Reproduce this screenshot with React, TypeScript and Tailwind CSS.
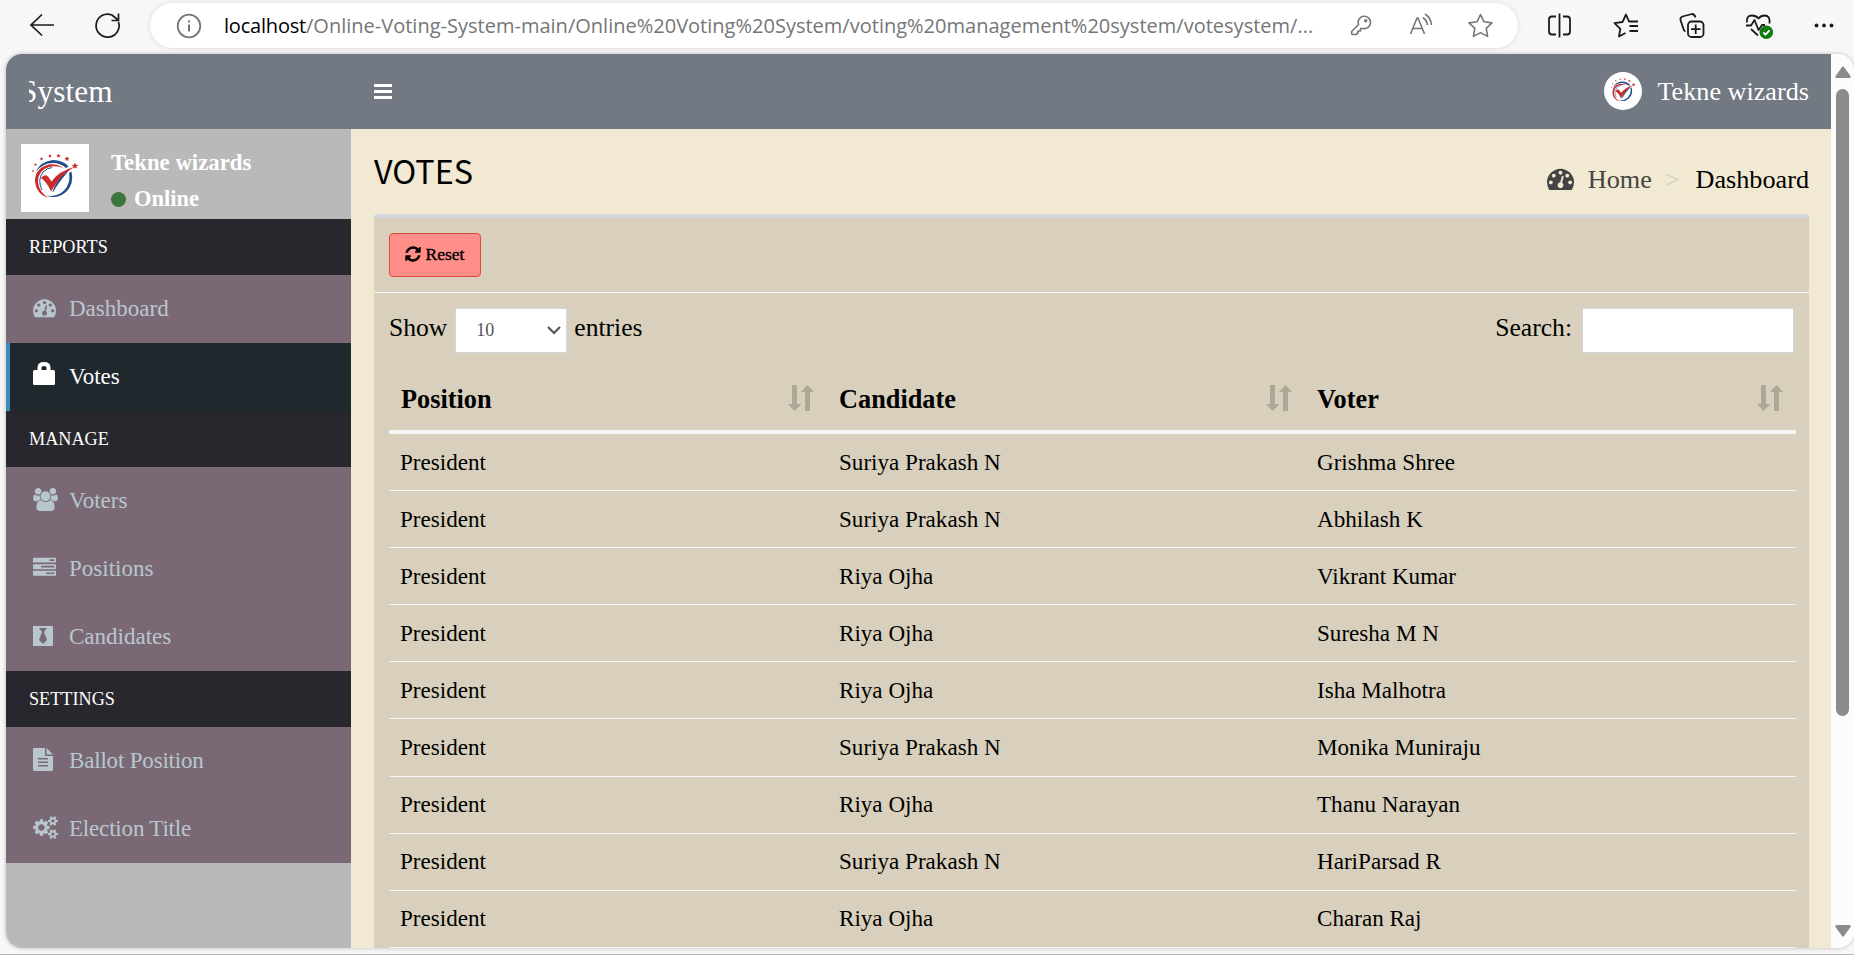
import React from "react";

const gaugePath =
  "M384 1152q0-53-37.5-90.5t-90.5-37.5-90.5 37.5-37.5 90.5 37.5 90.5 90.5 37.5 90.5-37.5 37.5-90.5zm192-448q0-53-37.5-90.5t-90.5-37.5-90.5 37.5-37.5 90.5 37.5 90.5 90.5 37.5 90.5-37.5 37.5-90.5zm428 481l101-382q6-26-7.5-48.5t-38.5-29.5-48 6.5-30 39.5l-101 382q-60 5-107 43.5t-63 98.5q-20 77 20 146t117 89 146-20 89-117q16-60-6-117t-72-91zm660-33q0-53-37.5-90.5t-90.5-37.5-90.5 37.5-37.5 90.5 37.5 90.5 90.5 37.5 90.5-37.5 37.5-90.5zm-640-640q0-53-37.5-90.5t-90.5-37.5-90.5 37.5-37.5 90.5 37.5 90.5 90.5 37.5 90.5-37.5 37.5-90.5zm448 192q0-53-37.5-90.5t-90.5-37.5-90.5 37.5-37.5 90.5 37.5 90.5 90.5 37.5 90.5-37.5 37.5-90.5zm320 448q0 261-141 483-19 29-54 29h-1402q-35 0-54-29-141-221-141-483 0-182 71-348t191-286 286-191 348-71 348 71 286 191 191 286 71 348z";
const refreshPath =
  "M1639 1056q0 5-1 7-64 268-268 434.5t-478 166.5q-146 0-282.5-55t-243.5-157l-129 129q-19 19-45 19t-45-19-19-45v-448q0-26 19-45t45-19h448q26 0 45 19t19 45-19 45l-137 137q71 66 161 102t187 36q134 0 250-65t186-179q11-17 53-117 8-23 30-23h192q13 0 22.5 9.5t9.5 22.5zm25-800v448q0 26-19 45t-45 19h-448q-26 0-45-19t-19-45 19-45l138-138q-148-137-349-137-134 0-250 65t-186 179q-11 17-53 117-8 23-30 23h-199q-13 0-22.5-9.5t-9.5-22.5v-7q65-268 270-434.5t480-166.5q146 0 284 55.5t245 156.5l130-129q19-19 45-19t45 19 19 45z";
const tasksPath =
  "M1024 1408h640v-128h-640v128zm-384-512h1024v-128h-1024v128zm640-512h384v-128h-384v128zm512 832v256q0 26-19 45t-45 19h-1664q-26 0-45-19t-19-45v-256q0-26 19-45t45-19h1664q26 0 45 19t19 45zm0-512v256q0 26-19 45t-45 19h-1664q-26 0-45-19t-19-45v-256q0-26 19-45t45-19h1664q26 0 45 19t19 45zm0-512v256q0 26-19 45t-45 19h-1664q-26 0-45-19t-19-45v-256q0-26 19-45t45-19h1664q26 0 45 19t19 45z";
const usersPath =
  "M593 896q-162 5-265 128h-134q-82 0-138-40.5t-56-118.5q0-353 124-353 6 0 43.5 21t97.5 42.5 119 21.5q67 0 133-23-5 37-5 66 0 139 81 256zm1071 637q0 120-73 189.5t-194 69.5h-874q-121 0-194-69.5t-73-189.5q0-53 3.5-103.5t14-109 26.5-108.5 43-97.5 62-81 85.5-53.5 111.5-20q10 0 43 21.5t73 48 107 48 135 21.5 135-21.5 107-48 73-48 43-21.5q61 0 111.5 20t85.5 53.5 62 81 43 97.5 26.5 108.5 14 109 3.5 103.5zm-1024-1277q0 106-75 181t-181 75-181-75-75-181 75-181 181-75 181 75 75 181zm704 384q0 159-112.5 271.5t-271.5 112.5-271.5-112.5-112.5-271.5 112.5-271.5 271.5-112.5 271.5 112.5 112.5 271.5zm576 225q0 78-56 118.5t-138 40.5h-134q-103-123-265-128 81-117 81-256 0-29-5-66 66 23 133 23 59 0 119-21.5t97.5-42.5 43.5-21q124 0 124 353zm-128-609q0 106-75 181t-181 75-181-75-75-181 75-181 181-75 181 75 75 181z";
const smallGear =
  "v140q0 16-149 31-12 27-30 52 51 113 51 138 0 4-4 7-122 71-124 71-8 0-46-47t-52-68q-20 2-30 2t-30-2q-14 21-52 68t-46 47q-2 0-124-71-4-3-4-7 0-25 51-138-18-25-30-52-149-15-149-31v-140q0-16 149-31 13-29 30-52-51-113-51-138 0-4 4-7 4-2 35-20t59-34 30-16q8 0 46 46.500t52 67.500q20-2 30-2t30 2q51-71 92-112l6-2q4 0 124 70 4 3 4 7 0 25-51 138 17 23 30 52 149 15 149 31z";
const cogsPath =
  "M896 896q0-106-75-181t-181-75-181 75-75 181 75 181 181 75 181-75 75-181zm768 512q0-52-38-90t-90-38-90 38-38 90q0 53 37.500 90.500t90.500 37.500 90.500-37.500 37.500-90.500zm0-1024q0-52-38-90t-90-38-90 38-38 90q0 53 37.500 90.500t90.500 37.500 90.500-37.500 37.500-90.500zm-384 421v185q0 10-7 19.500t-16 10.500l-155 24q-11 35-32 76 34 48 90 115 7 11 7 20 0 12-7 19-23 30-82.500 89.500t-78.500 59.500q-11 0-21-7l-115-90q-37 19-77 31-11 108-23 155-7 24-30 24h-186q-11 0-20-7.500t-10-17.500l-23-153q-34-10-75-31l-118 89q-7 7-20 7-11 0-21-8-144-133-144-160 0-9 7-19 10-14 41-53t47-61q-23-44-35-82l-152-24q-10-1-17-9.500t-7-19.500v-185q0-10 7-19.500t16-10.500l155-24q11-35 32-76-34-48-90-115-7-11-7-20 0-12 7-20 22-30 82-89t79-59q11 0 21 7l115 90q34-18 77-32 11-108 23-154 7-24 30-24h186q11 0 20 7.500t10 17.500l23 153q34 10 75 31l118-89q8-7 20-7 11 0 21 8 144 133 144 160 0 8-7 19-12 16-42 54t-45 60q23 48 34 82l152 23q10 2 17 10.500t7 19.500zM1920 1338" +
  smallGear +
  "M1920 314" +
  smallGear;

function Glyph({ d, box, className }: { d: string; box: string; className: string }) {
  return (
    <svg viewBox={box} className={className} fill="currentColor" fillRule="evenodd">
      <path d={d} />
    </svg>
  );
}

function Star({ x, y, r }: { x: number; y: number; r: number }) {
  const pts = Array.from({ length: 10 }, (_, i) => {
    const a = (Math.PI / 5) * i - Math.PI / 2;
    const q = i % 2 ? r * 0.45 : r;
    return `${x + q * Math.cos(a)},${y + q * Math.sin(a)}`;
  }).join(" ");
  return <polygon points={pts} fill="#cc2b2b" />;
}

function Logo({ className }: { className: string }) {
  return (
    <svg viewBox="0 0 68 68" className={className}>
      <path d="M14.500 28Q20 17 32 16Q42 16 47.500 22.500L45 24Q39 19 32 19Q22 19 14.500 28Z" fill="#20508c" />
      <path d="M50.500 27.500Q53.500 40 45 48Q36 56 25 51.500Q36 53.500 43 46.500Q50 39 48 29Z" fill="#20508c" />
      <path d="M42.500 24.500Q36 19.500 28 20.500Q14 24 14 37Q15 50 27.500 54Q18 48 17 38Q17 26 28 23Q36 21 42.500 24.500Z" fill="#cc2b2b" />
      <path d="M21 46Q16 36 22 28Q26 24 31 23.500" fill="none" stroke="#20508c" strokeWidth="1" />
      <path d="M20 34q3.500-4.500 7-1.500l3.500 5Q38 27 53 23Q39 32 30 47.500Q26 38 20 34Z" fill="#cc2b2b" />
      <path d="M46.500 27.500Q36 36 32 47.500Q36 40 46.500 27.500Z" fill="#20508c" stroke="#20508c" strokeWidth="1" />
      <Star x={12} y={27} r={1.300} />
      <Star x={14.500} y={20.500} r={1.700} />
      <Star x={20.500} y={15} r={1.900} />
      <Star x={29} y={12} r={2} />
      <Star x={37.500} y={11.800} r={2.300} />
      <Star x={46} y={14.800} r={2.600} />
      <Star x={54} y={22} r={3.500} />
    </svg>
  );
}

function Lock() {
  return (
    <svg viewBox="0 0 22 23" className="mb-[5px] h-[23px] w-[22px]" fill="none">
      <path d="M6.500 9V5.500Q6.500 2 11 2t4.500 3.500V9" stroke="currentColor" strokeWidth="4" />
      <rect y="8" width="22" height="15" rx="1.500" fill="currentColor" />
    </svg>
  );
}
function Tie() {
  return (
    <svg viewBox="0 0 20 20" className="h-[20px] w-[20px]" fill="currentColor" fillRule="evenodd">
      <path d="M0 0h20v20H0zM6 2l3 4-3 8 4 4 4-4-3-8 3-4z" />
    </svg>
  );
}
function Doc() {
  return (
    <svg viewBox="0 0 20 23" className="h-[23px] w-[20px]" fill="currentColor" fillRule="evenodd">
      <path d="M1 0h11v8h8v14l-1 1H1l-1-1V1zM5 10h10v1.500H5zM5 13.500h10V15H5zM5 17h10v1.500H5z" />
      <path d="M13.500 0 20 6.500h-6.500z" />
    </svg>
  );
}

function Section({ children }: { children: string }) {
  return (
    <div className="flex h-14 items-center bg-[#28272d] pl-[23px] text-[18.200px] leading-[22px] text-white">
      {children}
    </div>
  );
}
function Item({
  icon,
  label,
  active,
  tight,
}: {
  icon: React.ReactNode;
  label: string;
  active?: boolean;
  tight?: boolean;
}) {
  return (
    <div
      className={
        active
          ? "flex h-[68px] items-center border-l-4 border-[#3c8dbc] bg-[#1f282d] pl-[23px] text-white"
          : "flex h-[68px] items-center border-l-4 border-[#7a6974] bg-[#7a6974] pl-[23px] text-[#b8c7ce]"
      }
    >
      <span className="flex w-9 items-center pb-[3px]">{icon}</span>
      <span className={tight ? "text-[23px] leading-[26px] tracking-[-0.18px]" : "text-[23px] leading-[26px]"}>
        {label}
      </span>
    </div>
  );
}

function Sort() {
  return (
    <svg viewBox="0 0 26 26" className="h-[26px] w-[26px]" fill="#aea795">
      <path d="M4 0h5v19h4.500L6.500 26 0 19h4zM13 7l6.500-7L26 7h-4v19h-5V7z" />
    </svg>
  );
}

const rows = [
  ["Suriya Prakash N", "Grishma Shree"],
  ["Suriya Prakash N", "Abhilash K"],
  ["Riya Ojha", "Vikrant Kumar"],
  ["Riya Ojha", "Suresha M N"],
  ["Riya Ojha", "Isha Malhotra"],
  ["Suriya Prakash N", "Monika Muniraju"],
  ["Riya Ojha", "Thanu Narayan"],
  ["Suriya Prakash N", "HariParsad R"],
  ["Riya Ojha", "Charan Raj"],
];

function BrowserBar() {
  return (
    <div className="flex h-[54px] shrink-0 items-start bg-[#f7f7f7] text-[#1b1b1b]">
      <svg viewBox="0 0 150 54" className="h-[54px] w-[150px] shrink-0" fill="none" stroke="currentColor" strokeWidth="1.700">
        <path d="M42 14.500 31 25l11 10.500M31 25h23" />
        <path d="M118.500 22A11.500 11.500 0 1 1 112 15l5.500 4.500M118.500 13.500V20.500H111.500" />
      </svg>
      <div className="mt-[3px] flex h-[45px] w-[1368px] shrink-0 items-center rounded-full bg-white pl-[26px] text-[#767676] shadow-[0_0_5px_rgba(0,0,0,0.12)]">
        <svg viewBox="0 0 26 26" className="h-[26px] w-[26px] shrink-0" fill="none" stroke="currentColor" strokeWidth="1.800">
          <circle cx="13" cy="13" r="11.300" />
          <path d="M13 11.500v7M13 7.500v2" strokeWidth="2" />
        </svg>
        <div className="ml-[22px] w-[1109px] shrink-0 whitespace-nowrap font-['Open_Sans',sans-serif] text-[20px]">
          <span className="tracking-[-0.2px] text-black">localhost</span>
          <span className="tracking-[0.01px]">
            /Online-Voting-System-main/Online%20Voting%20System/voting%20management%20system/votesystem/...
          </span>
        </div>
        <svg viewBox="1333 3 160 45" className="h-[45px] w-[160px] shrink-0" fill="none" stroke="currentColor" strokeWidth="1.600" strokeLinejoin="round">
          <path d="M1351.700 31.500 1358.500 24.500A6.200 6.200 0 1 1 1363 28.500H1360.500V31H1358V33L1356 34.500H1352.500Q1351.700 34.500 1351.700 33.500Z" />
          <circle cx="1365.700" cy="20.700" r="1" />
          <path d="M1410.500 34 1417 18h1l6.500 16M1413 28.500h9.500M1423 17.500q4 3 4.500 7.500M1425 14q6 4 6.500 11" />
          <path d="m1480.500 14.500 3.500 7.300 8 1.100-5.800 5.500 1.400 8-7.100-3.800-7.100 3.800 1.400-8-5.800-5.500 8-1.100z" />
        </svg>
      </div>
      <svg viewBox="1518 0 336 54" className="h-[54px] w-[336px] shrink-0" fill="none" stroke="currentColor" strokeWidth="1.800" strokeLinejoin="round">
        <path d="M1556 16.500h-4q-3 0-3 3v12q0 3 3 3h4M1563 16.500h4q3 0 3 3v12q0 3-3 3h-4M1559.500 13.500v24" />
        <path d="M1631 21.500H1629L1626 14.500 1622.500 22 1614.500 23.200 1620.300 28.800 1619 36.500 1625.500 33M1629.500 26H1638M1629.500 31H1638M1629 21.500H1638" />
        <rect x="1688" y="21.500" width="15.500" height="15.500" rx="3.500" />
        <path d="M1695.700 24.500v9.500M1691 29.200h9.500M1685.500 31.500q-1.500-.5-2-2.500l-3-9q-.5-2.500 2-3.500l9.500-2.500q2.500 0 3.500 3.500" />
        <path d="M1747 22.500q-1-7 5-7 4 0 6.500 3 2.500-3 6-3 6 0 5 8M1746 25.500h5l3.500-5.500 4 10 3.500-5h3M1751 29l7 6.500" />
        <circle cx="1766.300" cy="32.300" r="6.800" fill="#107c10" stroke="none" />
        <path d="m1763.300 32.500 2.200 2.200 4-4.400" stroke="white" />
        <g fill="currentColor" stroke="none">
          <circle cx="1816.500" cy="25.500" r="1.900" />
          <circle cx="1824" cy="25.500" r="1.900" />
          <circle cx="1831.500" cy="25.500" r="1.900" />
        </g>
      </svg>
    </div>
  );
}

function Header({ label, w }: { label: string; w: string }) {
  return (
    <div className={`flex items-center justify-between pl-3 pr-[13px] text-[26.300px] font-bold ${w}`}>
      <span className="pt-1">{label}</span>
      <Sort />
    </div>
  );
}

export default function App() {
  return (
    <div className="flex h-[955px] w-[1854px] flex-col overflow-hidden bg-[#f7f7f7] font-['Liberation_Serif',serif]">
      <BrowserBar />
      <div className="ml-1.5 flex h-[894px] overflow-hidden rounded-2xl shadow-[0_0_4px_rgba(0,0,0,0.25)]">
        <div className="flex w-[1825px] flex-col">
          <div className="flex h-[75px] shrink-0 items-center bg-[#727983] text-white">
            <div className="w-[345px] pl-[23px]">
              <div className="flex h-10 w-[200px] items-center overflow-hidden pt-0.5 text-[31.300px]">
                <span className="-ml-[9px] tracking-[0.1px]">System</span>
              </div>
            </div>
            <svg viewBox="0 0 18 15" className="ml-[23px] h-[15px] w-[18px]" fill="white">
              <path d="M0 0h18v3H0zM0 6h18v3H0zM0 12h18v3H0z" />
            </svg>
            <div className="ml-auto flex items-center gap-[15px] pr-[22px]">
              <div className="flex h-[38px] w-[38px] items-center justify-center rounded-full bg-white">
                <Logo className="h-9 w-9" />
              </div>
              <span className="text-[26.200px]">Tekne wizards</span>
            </div>
          </div>
          <div className="flex h-[819px]">
            <div className="w-[345px] shrink-0 bg-[#b9b9b9]">
              <div className="flex h-[90px] pl-[15px] pt-[15px] font-bold text-white">
                <div className="h-[68px] w-[68px] bg-white">
                  <Logo className="h-[68px] w-[68px]" />
                </div>
                <div className="ml-[22px] pt-px text-[22.800px] leading-9">
                  <div>Tekne wizards</div>
                  <div className="flex items-center gap-2">
                    <span className="mt-px h-[15px] w-[15px] rounded-full bg-[#3c763d]" />
                    <span className="text-[22.500px]">Online</span>
                  </div>
                </div>
              </div>
              <Section>REPORTS</Section>
              <Item icon={<Glyph d={gaugePath} box="0 0 1792 1792" className="h-[23px] w-[23px]" />} label="Dashboard" />
              <Item active icon={<Lock />} label="Votes" />
              <Section>MANAGE</Section>
              <Item icon={<Glyph d={usersPath} box="0 0 1920 1792" className="h-[23px] w-[25px]" />} label="Voters" />
              <Item icon={<Glyph d={tasksPath} box="0 0 1792 1792" className="h-[23px] w-[23px]" />} label="Positions" />
              <Item icon={<Tie />} label="Candidates" />
              <Section>SETTINGS</Section>
              <Item tight icon={<Doc />} label="Ballot Position" />
              <Item tight icon={<Glyph d={cogsPath} box="0 0 1920 1792" className="h-[23px] w-[25px]" />} label="Election Title" />
            </div>
            <div className="w-[1480px] bg-[#f1e9d2] pl-[23px] pr-[22px]">
              <div className="flex h-[85px] justify-between">
                <h1 className="pt-[17px] font-['Noto_Sans_CJK_SC',sans-serif] text-[32.300px] leading-[48px]">VOTES</h1>
                <div className="flex h-[30px] items-center pt-[51px] text-[26.200px] leading-[30px]">
                  <Glyph d={gaugePath} box="0 0 1792 1792" className="mb-[3px] h-[27px] w-[27px] text-[#444]" />
                  <span className="ml-[14px] text-[#444]">Home</span>
                  <span className="ml-[13px] mr-[16px] text-[#ccc]">&gt;</span>
                  <span>Dashboard</span>
                </div>
              </div>
              <div className="h-[734px] rounded-t-[4px] border-t-4 border-[#d2d6de] bg-[#d8d0bc]">
                <div className="flex h-[75px] border-b border-[#f4f4f4] pl-[15px] pt-[15px]">
                  <button className="flex h-11 w-[92px] items-center justify-center gap-1 rounded border border-[#dd4b39] bg-[#ff8e88] pb-0.5 pr-0.5 text-[17.500px] [-webkit-text-stroke:0.400px_black]">
                    <Glyph d={refreshPath} box="0 0 1792 1792" className="h-[18px] w-[18px]" />
                    Reset
                  </button>
                </div>
                <div className="flex h-[60px] items-start pl-[15px] pr-[15px] pt-[15px] text-[25.600px]">
                  <span className="pt-[3px] leading-[34px]">Show</span>
                  <div className="ml-2 flex h-[45px] w-[112px] items-center justify-between border border-[#d2d6de] bg-white pl-5 pr-[5px] text-[18px] text-[#555]">
                    10
                    <svg viewBox="0 0 14 9" className="h-[9px] w-[14px]" fill="none" stroke="#555" strokeWidth="2.200">
                      <path d="m1 1 6 6 6-6" />
                    </svg>
                  </div>
                  <span className="ml-[7px] pt-[3px] leading-[34px]">entries</span>
                  <span className="ml-auto pt-[3px] leading-[34px]">Search:</span>
                  <input className="ml-[10px] h-[45px] w-[212px] border border-[#d2d6de] bg-white" />
                </div>
                <div className="ml-[15px] w-[1407px]">
                  <div className="flex h-[81px] border-b-4 border-[#f4f4f4] pt-[12px]">
                    <Header label="Position" w="w-[438px]" />
                    <Header label="Candidate" w="w-[478px]" />
                    <Header label="Voter" w="w-[491px]" />
                  </div>
                  {rows.map(([candidate, voter]) => (
                    <div
                      key={voter}
                      className="flex h-[57.100px] items-center border-b border-[#f4f4f4] pb-px text-[23.100px] leading-[26px]"
                    >
                      <span className="w-[438px] pl-[11px]">President</span>
                      <span className="w-[478px] pl-3">{candidate}</span>
                      <span className="pl-3">{voter}</span>
                    </div>
                  ))}
                </div>
              </div>
            </div>
          </div>
        </div>
        <div className="flex w-[23px] flex-col items-center bg-[#fcfcfc] pt-3">
          <svg viewBox="0 0 16 12" className="h-3 w-4" fill="#8b8b8b">
            <path d="M7 1q1-1.500 2 0l6.500 9q.5 2-1 2h-13q-1.500 0-1-2z" />
          </svg>
          <div className="mt-[11px] h-[627px] w-[13px] rounded-full bg-[#8b8b8b]" />
          <svg viewBox="0 0 16 12" className="mt-auto mb-[11px] h-3 w-4 rotate-180" fill="#8b8b8b">
            <path d="M7 1q1-1.500 2 0l6.500 9q.5 2-1 2h-13q-1.500 0-1-2z" />
          </svg>
        </div>
      </div>
      <div className="mt-auto h-px bg-[#b9b6b4]" />
    </div>
  );
}
